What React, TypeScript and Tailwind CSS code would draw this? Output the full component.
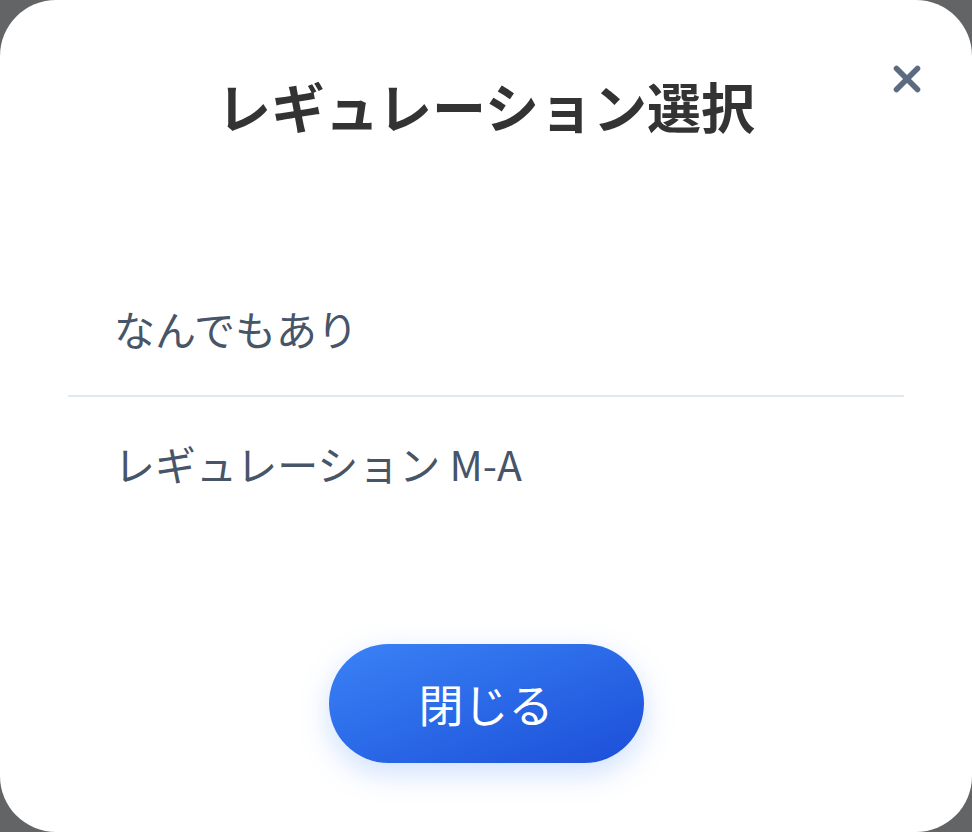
import { X } from "lucide-react";

const font = {
  fontFamily: '"Noto Sans CJK JP", "Noto Sans", sans-serif',
};

const options = ["なんでもあり", "レギュレーション M-A"];

export default function App() {
  return (
    <div className="h-[832px] w-[972px] bg-[#636466]" style={font}>
      <div className="relative flex h-full w-full flex-col rounded-[56px] bg-white">
        <button className="absolute right-[44px] top-[58px] text-[#5b6b82]">
          <X size={42} strokeWidth={3.2} />
        </button>

        <h1 className="mt-[70px] text-center text-[54px] font-bold leading-[72px] text-[#333333]">
          レギュレーション選択
        </h1>

        <ul className="mx-[68px] mt-[121px]">
          {options.map((o, i) => (
            <li
              key={o}
              className={`flex h-[134px] items-center pl-[46px] text-[41px] text-[#475569] ${
                i < options.length - 1 ? "border-b-2 border-[#e2e8f0]" : ""
              }`}
            >
              {o}
            </li>
          ))}
        </ul>

        <div className="mt-[113px] flex justify-center">
          <button className="h-[119px] w-[315px] rounded-full bg-gradient-to-br from-[#3b82f6] to-[#1d4ed8] text-[45px] text-white shadow-[0_10px_30px_rgba(59,130,246,0.25)]">
            閉じる
          </button>
        </div>
      </div>
    </div>
  );
}
